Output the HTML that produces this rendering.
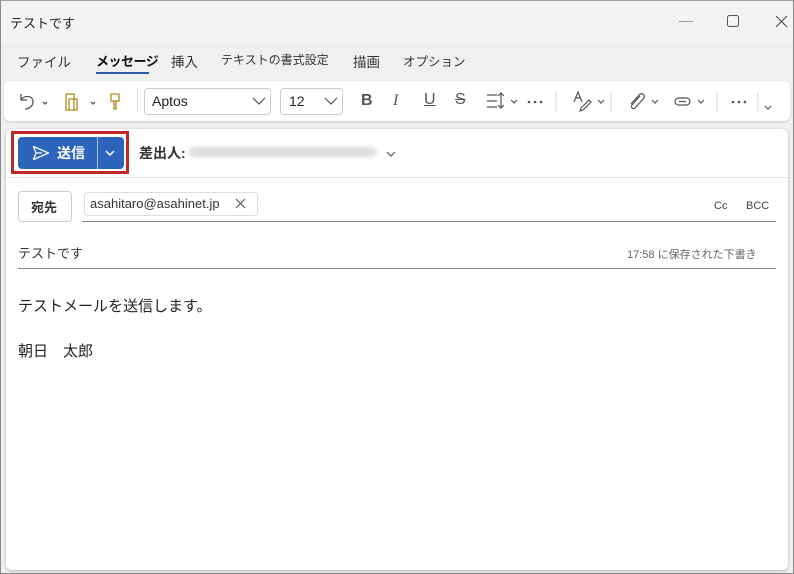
<!DOCTYPE html>
<html><head><meta charset="utf-8"><style>
*{box-sizing:border-box;margin:0;padding:0}
body{width:794px;height:574px;overflow:hidden;font-family:"Liberation Sans","Noto Sans CJK JP",sans-serif;background:#fff}
.win{position:absolute;left:0;top:0;width:794px;height:574px;border:1px solid #8a8a8a;border-top-color:#a0a0a0;background:#f0f0f0}
.a{position:absolute;white-space:nowrap}
svg{position:absolute}
.t{font-size:13.5px;color:#333;top:50px}
</style></head><body><div class="win">
<div class="a" style="left:0;top:0;width:792px;height:43px;background:#f3f3f3"></div>
<div class="a" style="left:9px;top:12px;font-size:13px;color:#222">テストです</div>
<svg style="left:678px;top:20px" width="14" height="2"><rect width="14" height="1" fill="#999"/></svg>
<svg style="left:726px;top:14px" width="13" height="13"><rect x=".5" y=".5" width="11" height="11" rx="2" fill="none" stroke="#555"/></svg>
<svg style="left:774px;top:14px" width="13" height="13"><path d="M1 1L12 12M12 1L1 12" stroke="#444"/></svg>
<div class="a t" style="left:16px">ファイル</div>
<div class="a t" style="left:95px;color:#111;font-weight:bold;font-size:13px;letter-spacing:-0.5px">メッセージ</div>
<div class="a" style="left:95px;top:71px;width:53px;height:2px;background:#2b5aa6"></div>
<div class="a t" style="left:170px">挿入</div>
<div class="a t" style="left:220px;font-size:12px">テキストの書式設定</div>
<div class="a t" style="left:352px">描画</div>
<div class="a t" style="left:402px;font-size:12.5px">オプション</div>
<div class="a" style="left:3px;top:80px;width:786px;height:40px;background:#fff;border-radius:6px;box-shadow:0 1px 2px rgba(0,0,0,.15)"></div>
<svg style="left:16px;top:90px" width="130" height="22" fill="none" stroke="#555" stroke-width="1.3">
<path d="M4 3v6h6M4 9c3-5 12-5 12 2 0 4-4 7-8 7"/><path d="M26 11l2 2 2-2"/>
<path d="M49 3h8v16h-8zM52 8h8v11h-8z" stroke="#b08a20"/><path d="M74 11l2 2 2-2"/>
<path d="M94 3h8v7h-8zM97 10v8h2v-8" stroke="#b08a20"/></svg>
<div class="a" style="left:136px;top:88px;width:1px;height:24px;background:#ddd"></div>
<div class="a" style="left:143px;top:87px;width:127px;height:27px;border:1px solid #ccc;border-radius:4px"></div>
<div class="a" style="left:151px;top:92px;font-size:14px;color:#222">Aptos</div>
<svg style="left:251px;top:96px" width="14" height="9"><path d="M1 1l6 6 6-6" fill="none" stroke="#555" stroke-width="1.2"/></svg>
<div class="a" style="left:279px;top:87px;width:63px;height:27px;border:1px solid #ccc;border-radius:4px"></div>
<div class="a" style="left:288px;top:92px;font-size:14px;color:#222">12</div>
<svg style="left:323px;top:96px" width="14" height="9"><path d="M1 1l6 6 6-6" fill="none" stroke="#555" stroke-width="1.2"/></svg>
<div class="a" style="left:360px;top:91px;font-size:16px;font-weight:bold;color:#555">B</div>
<div class="a" style="left:392px;top:91px;font-size:16px;font-style:italic;color:#555;font-family:'Liberation Serif',serif">I</div>
<div class="a" style="left:423px;top:90px;font-size:16px;color:#555;text-decoration:underline">U</div>
<div class="a" style="left:454px;top:90px;font-size:16px;color:#555;text-decoration:line-through">S</div>
<svg style="left:484px;top:89px" width="300" height="22" fill="none" stroke="#555" stroke-width="1.2">
<path d="M2 5h10M2 11h10M2 17h10M16 3v15M13 6l3-3 3 3M13 15l3 3 3-3M26 10l3 3 3-3"/>
<circle cx="44" cy="12" r="1.3" fill="#555" stroke="none"/><circle cx="50" cy="12" r="1.3" fill="#555" stroke="none"/><circle cx="56" cy="12" r="1.3" fill="#555" stroke="none"/>
<path d="M71 1v24" stroke="#ddd"/>
<path d="M89 12l4-10 4 10M90 8h6M96 18l8-8 2 2-8 8-3 1zM113 10l3 3 3-3"/>
<path d="M126 1v24" stroke="#ddd"/>
<path d="M155 6l-8 9a2 2 0 0 0 3 3l9-10a3 3 0 0 0-4-4l-9 10"/><path d="M167 10l3 3 3-3"/>
<rect x="190" y="8" width="15" height="7" rx="3.5"/><path d="M194 11.5h7M213 10l3 3 3-3"/>
<path d="M232 1v24" stroke="#ddd"/>
<circle cx="248" cy="12" r="1.3" fill="#555" stroke="none"/><circle cx="254" cy="12" r="1.3" fill="#555" stroke="none"/><circle cx="260" cy="12" r="1.3" fill="#555" stroke="none"/>
<path d="M273 1v24" stroke="#ddd"/><path d="M280 16l3 3 3-3"/></svg>
<div class="a" style="left:5px;top:128px;width:782px;height:441px;background:#fff;border-radius:6px;box-shadow:0 1px 3px rgba(0,0,0,.25)"></div>
<div class="a" style="left:5px;top:176px;width:782px;height:1px;background:#e4e4e4"></div>
<div class="a" style="left:10px;top:130px;width:118px;height:43px;border:3px solid #c0282b"></div>
<div class="a" style="left:17px;top:136px;width:106px;height:32px;background:#2d65bd;border-radius:4px"></div>
<div class="a" style="left:96px;top:136px;width:1px;height:32px;background:#a8c0e6"></div>
<svg style="left:31px;top:144px" width="18" height="16"><path d="M1.5 1.5l15 6.5-15 6.5 2.5-6.5zM4 8h6" fill="none" stroke="#fff" stroke-width="1.3" stroke-linejoin="round"/></svg>
<div class="a" style="left:56px;top:142px;font-size:14px;font-weight:bold;color:#fff">送信</div>
<svg style="left:104px;top:149px" width="10" height="7"><path d="M1 1l4 4 4-4" fill="none" stroke="#fff" stroke-width="1.5"/></svg>
<div class="a" style="left:138px;top:142px;font-size:14px;font-weight:bold;color:#333">差出人:</div>
<div class="a" style="left:188px;top:146px;width:188px;height:10px;background:#ddd;border-radius:5px;filter:blur(2px)"></div>
<svg style="left:385px;top:150px" width="10" height="7"><path d="M1 1l4 4 4-4" fill="none" stroke="#555" stroke-width="1.2"/></svg>
<div class="a" style="left:17px;top:190px;width:54px;height:31px;border:1px solid #ccc;border-radius:4px"></div>
<div class="a" style="left:30px;top:196px;font-size:13px;font-weight:bold;color:#333">宛先</div>
<div class="a" style="left:83px;top:191px;width:174px;height:24px;border:1px solid #ddd;border-radius:4px"></div>
<div class="a" style="left:89px;top:195px;font-size:13px;color:#333">asahitaro@asahinet.jp</div>
<svg style="left:234px;top:197px" width="11" height="11"><path d="M1 1l9 9M10 1l-9 9" stroke="#555" stroke-width="1.1"/></svg>
<div class="a" style="left:81px;top:220px;width:694px;height:1px;background:#888"></div>
<div class="a" style="left:713px;top:199px;font-size:11px;color:#444">Cc</div>
<div class="a" style="left:745px;top:199px;font-size:11px;color:#444">BCC</div>
<div class="a" style="left:17px;top:242px;font-size:13px;color:#333">テストです</div>
<div class="a" style="left:626px;top:245px;font-size:11px;color:#666">17:58 に保存された下書き</div>
<div class="a" style="left:17px;top:267px;width:758px;height:1px;background:#888"></div>
<div class="a" style="left:17px;top:294px;font-size:15px;color:#222">テストメールを送信します。</div>
<div class="a" style="left:17px;top:339px;font-size:15px;color:#222">朝日　太郎</div>
</div></body></html>
